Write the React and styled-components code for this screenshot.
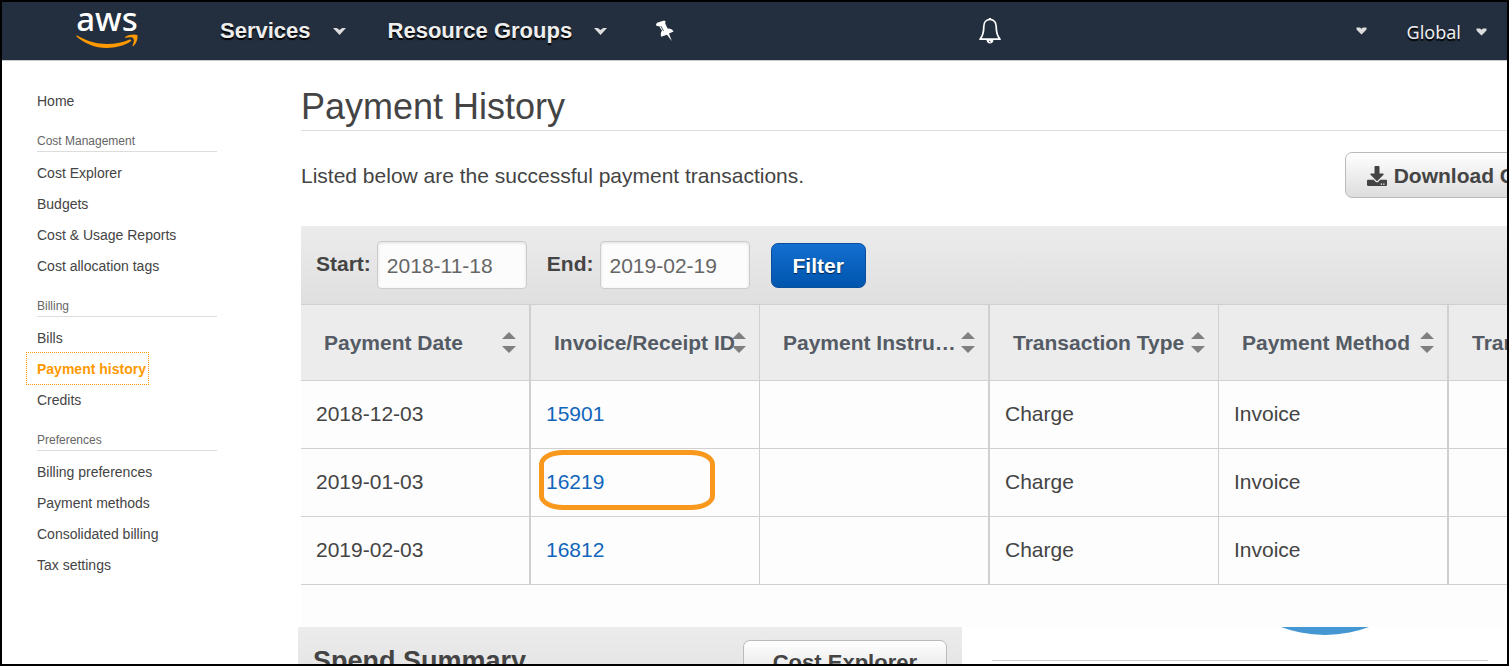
import React from "react";
import styled, { createGlobalStyle, css } from "styled-components";
import { FaDownload } from "react-icons/fa";

const GlobalStyle = createGlobalStyle`
  *, *::before, *::after { box-sizing: border-box; }
  body {
    margin: 0;
    background: #fff;
    color: #444;
    font-family: "Liberation Sans", Arial, Helvetica, sans-serif;
    font-size: 21px;
  }
  button, input { font: inherit; color: inherit; }
  a { text-decoration: none; color: inherit; }
`;

const Window = styled.div`
  height: 100vh;
  display: flex;
  flex-direction: column;
  overflow: hidden;
  border: 2px solid #000;
`;

/* ---------- top bar ---------- */

const TopBar = styled.header`
  flex: none;
  display: flex;
  align-items: center;
  height: 59px;
  padding: 0 20px 0 74px;
  background: #232f3e;
  border-bottom: 1px solid #c8cacc;
  color: #eee;
`;

const Logo = styled.a`
  display: flex;
  flex-direction: column;
  align-items: center;
  width: 62px;
  margin-right: 82px;
  padding-bottom: 8px;
  color: #fff;
  font-family: "Noto Sans", "Open Sans", sans-serif;
  font-size: 33px;
  font-weight: 500;
  line-height: 24px;
  svg { display: block; margin-top: 3px; }
`;

const NavButton = styled.button`
  display: flex;
  align-items: center;
  gap: 22px;
  margin: 0 ${(p) => p.$after || 0}px 0 0;
  padding: 0;
  border: 0;
  background: none;
  color: #eee;
  font-size: 22px;
  font-weight: bold;
  line-height: 26px;
  text-shadow: 0 2px 1px #000;
`;

const RegionButton = styled(NavButton)`
  gap: 15px;
  padding-top: 2px;
  font-family: "Noto Sans", "Open Sans", sans-serif;
  font-size: 18px;
  font-weight: normal;
`;

const IconButton = styled.button`
  display: flex;
  padding: 0;
  border: 0;
  background: none;
  color: #fff;
`;

const Tools = styled.div`
  flex: 1;
  display: flex;
  align-items: center;
  justify-content: space-between;
  margin-left: 303px;
`;

const Account = styled.div`
  display: flex;
  align-items: center;
  gap: 40px;
`;

/* ---------- side navigation ---------- */

const Body = styled.div`
  flex: 1;
  min-height: 0;
  display: flex;
  align-items: flex-start;
`;

const SideNav = styled.nav`
  flex: none;
  width: 215px;
  margin-right: 84px;
  padding: 24px 0 0 25px;
  font-size: 14px;
`;

const NavHeading = styled.h2`
  height: 36px;
  margin: 0 0 5px 10px;
  padding-top: 16px;
  border-bottom: 1px solid #ddd;
  color: #666;
  font-size: 12px;
  font-weight: normal;
  line-height: 18px;
`;

const NavLink = styled.a`
  display: block;
  width: max-content;
  padding: 2px 2px 0 10px;
  line-height: 29px;
  ${(p) =>
    p.$active &&
    css`
      color: #f90;
      font-weight: bold;
      outline: 1px dotted #f90;
    `}
`;

/* ---------- payment history ---------- */

const Main = styled.main`
  flex: 1;
  min-width: 0;
`;

const Title = styled.h1`
  height: 70px;
  margin: 0;
  padding-top: 25px;
  border-bottom: 1px solid #ddd;
  font-size: 36px;
  font-weight: normal;
  line-height: 42px;
`;

const Intro = styled.div`
  display: flex;
  align-items: center;
  justify-content: space-between;
  margin: 21px -58px 28px 0;
  p { margin: 0; padding-top: 2px; line-height: 24px; }
`;

const Button = styled.button`
  display: flex;
  align-items: center;
  gap: 7px;
  height: 46px;
  padding: 2px ${(p) => p.$pad || 21}px 0;
  border: 1px solid #bbb;
  border-radius: 7px;
  background: linear-gradient(#fff, #ddd);
  font-size: ${(p) => p.$size || 21}px;
  font-weight: bold;
  white-space: nowrap;
`;

const FilterButton = styled(Button)`
  height: 45px;
  margin-left: 21px;
  border-color: #0a4f9e;
  background: linear-gradient(#146fd0, #0055ad);
  color: #fff;
  text-shadow: 0 1px 1px #024;
`;

const FilterBar = styled.form`
  display: flex;
  align-items: center;
  height: 78px;
  padding: 0 15px;
  background: linear-gradient(#ececec, #dfdfdf);
`;

const Field = styled.label`
  display: flex;
  align-items: center;
  gap: 6px;
  & + & { margin-left: 20px; }
  span { padding-bottom: 2px; font-weight: bold; }
`;

const DateInput = styled.input`
  width: 150px;
  height: 48px;
  padding: 2px 9px 0;
  border: 1px solid #ccc;
  border-radius: 4px;
  background: #fcfcfc;
  box-shadow: inset 0 1px 3px #ddd;
  color: #666;
`;

const TableArea = styled.div`
  overflow: hidden;
  padding-bottom: 42px;
  background: #fdfdfd;
`;

const Table = styled.table`
  table-layout: fixed;
  width: 1377px;
  border-collapse: separate;
  border-spacing: 0;
  border-top: 1px solid #d0d0d0;
`;

const edge = css`
  position: relative;
  border-bottom: 1px solid #d0d0d0;
  border-right: 1px solid #d0d0d0;
  text-align: left;
  white-space: nowrap;
  &:nth-child(odd) { border-right-width: 2px; }
`;

const HeadCell = styled.th`
  ${edge}
  height: 76px;
  padding: 0 0 0 23px;
  background: #ececec;
  color: #545b64;
`;

const Cell = styled.td`
  ${edge}
  height: 68px;
  padding: 0 0 2px 15px;
  a { color: #16b; }
`;

const SortIcon = styled.svg`
  position: absolute;
  top: 27px;
  right: 13px;
`;

const Highlight = styled.span`
  position: absolute;
  top: 1px;
  left: 8px;
  width: 176px;
  height: 60px;
  border: 5px solid #f8981d;
  border-radius: 24px / 14px;
  pointer-events: none;
`;

/* ---------- spend summary ---------- */

const Bottom = styled.section`
  display: flex;
  align-items: flex-start;
  margin-left: -3px;
  background: #fff;
`;

const SummaryHead = styled.div`
  flex: none;
  display: flex;
  align-items: flex-start;
  justify-content: space-between;
  width: 664px;
  height: 78px;
  padding: 13px 15px;
  background: linear-gradient(#ececec, #dfdfdf);
  h2 {
    margin: 0;
    padding-top: 5px;
    font-size: 27px;
    line-height: 32px;
  }
`;

const SummaryButton = styled(Button)`
  padding-top: 0;
`;

const ChartPanel = styled.div`
  flex: 1;
  display: flex;
  flex-direction: column;
  align-items: center;
  margin: 0 19px 0 30px;
  padding-left: 169px;
  svg { display: block; }
`;

const Rule = styled.hr`
  align-self: stretch;
  margin: 25px 0 0 -169px;
  border: 0;
  border-top: 1px solid #ccc;
`;

function Caret() {
  return (
    <svg width="13" height="8" viewBox="0 0 13 8" aria-hidden="true">
      <path d="M0 1H3.800L6.500 3L9.200 1H13L6.500 8Z" fill="#ddd" />
    </svg>
  );
}

function SmallCaret() {
  return (
    <svg width="11" height="8" viewBox="0 0 11 8" aria-hidden="true">
      <path d="M.5 .5H4L5.500 1.800L7 .5H10.500V2.500L5.500 7.500L.5 2.500Z" fill="#ddd" />
    </svg>
  );
}

function Smile() {
  return (
    <svg width="62" height="14" viewBox="0 0 62 14" fill="#f90" aria-hidden="true">
      <path d="M.2 2.300C0 1.500 .8 1.300 1.500 1.800C12 7.800 21 10 31 10C40 10 47 8.300 53.500 5.500C55 5 56 6.300 54.800 7.300C48 12 39 14 31 14C19 14 8 9.500 .2 2.300Z" />
      <path d="M57.200 4.200C56 2.800 52 3.500 49.500 3.800C48.800 3.900 48.700 3.300 49.300 2.800C53 .3 59 0 61.200 1C62.300 2.500 61 9 57.500 12C56.900 12.500 56.300 12.200 56.600 11.600C57.400 9.500 58.600 5.800 57.200 4.200Z" />
    </svg>
  );
}

function Pin() {
  return (
    <svg width="20" height="22" viewBox="0 0 20 22" aria-hidden="true">
      <path
        d="M1 4.500L2 2.700L9.200 .5L10.600 1.500L10.200 3.600L12.600 8.600C15.200 8.400 17.600 9.400 18.600 11.500L14 13.600L16.800 21L12 14.700L6.200 16.800C5.400 14.500 5.800 12.500 7 10.800L4.300 6.200L1.600 6Z"
        fill="#fff"
      />
      <path d="M5.800 6L8.600 11" stroke="#232f3e" strokeWidth=".8" />
    </svg>
  );
}

function Bell() {
  return (
    <svg width="24" height="28" viewBox="0 0 24 28" fill="none" aria-hidden="true">
      <path
        d="M12 2.500C8 2.500 5.800 5.500 5.800 9.500C5.800 15 4.800 19 2 22.200H22C19.200 19 18.200 15 18.200 9.500C18.200 5.500 16 2.500 12 2.500Z"
        stroke="#fff"
        strokeWidth="1.700"
        strokeLinejoin="round"
      />
      <path d="M10.800 1H13.200V3H10.800Z" fill="#fff" />
      <path d="M8.500 22.500H15.500C15.500 25 14 26.500 12 26.500S8.500 25 8.500 22.500Z" fill="#fff" />
      <path d="M11 24L12.500 25" stroke="#232f3e" />
    </svg>
  );
}

function Sort() {
  return (
    <SortIcon width="14" height="21" viewBox="0 0 14 21" fill="#808080" aria-hidden="true">
      <path d="M0 7L7 0L14 7ZM0 14H14L7 21Z" />
    </SortIcon>
  );
}

const navGroups = [
  ["Cost Management", ["Cost Explorer", "Budgets", "Cost & Usage Reports", "Cost allocation tags"]],
  ["Billing", ["Bills", "Payment history", "Credits"]],
  ["Preferences", ["Billing preferences", "Payment methods", "Consolidated billing", "Tax settings"]],
];

const columns = [
  "Payment Date",
  "Invoice/Receipt ID",
  "Payment Instru…",
  "Transaction Type",
  "Payment Method",
  "Transaction",
];

const payments = [
  { date: "2018-12-03", id: "15901" },
  { date: "2019-01-03", id: "16219", marked: true },
  { date: "2019-02-03", id: "16812" },
];

export default function App() {
  return (
    <>
      <GlobalStyle />
      <Window>
        <TopBar>
          <Logo href="#">
            aws
            <Smile />
          </Logo>
          <NavButton $after={42}>
            Services <Caret />
          </NavButton>
          <NavButton $after={48}>
            Resource Groups <Caret />
          </NavButton>
          <IconButton aria-label="Pin">
            <Pin />
          </IconButton>
          <Tools>
            <IconButton aria-label="Notifications">
              <Bell />
            </IconButton>
            <Account>
              <NavButton aria-label="Account">
                <SmallCaret />
              </NavButton>
              <RegionButton>
                Global <SmallCaret />
              </RegionButton>
            </Account>
          </Tools>
        </TopBar>

        <Body>
          <SideNav>
            <NavLink href="#">Home</NavLink>
            {navGroups.map(([heading, links]) => (
              <React.Fragment key={heading}>
                <NavHeading>{heading}</NavHeading>
                {links.map((text) => (
                  <NavLink key={text} href="#" $active={text === "Payment history"}>
                    {text}
                  </NavLink>
                ))}
              </React.Fragment>
            ))}
          </SideNav>

          <Main>
            <Title>Payment History</Title>
            <Intro>
              <p>Listed below are the successful payment transactions.</p>
              <Button>
                <FaDownload size={20} /> Download CSV
              </Button>
            </Intro>

            <FilterBar onSubmit={(e) => e.preventDefault()}>
              <Field>
                <span>Start:</span>
                <DateInput type="text" defaultValue="2018-11-18" />
              </Field>
              <Field>
                <span>End:</span>
                <DateInput type="text" defaultValue="2019-02-19" />
              </Field>
              <FilterButton>Filter</FilterButton>
            </FilterBar>

            <TableArea>
              <Table>
                <colgroup>
                  {columns.map((name, i) => (
                    <col key={name} width={i % 2 ? 229 : 230} />
                  ))}
                </colgroup>
                <thead>
                  <tr>
                    {columns.map((name) => (
                      <HeadCell key={name} scope="col">
                        {name}
                        <Sort />
                      </HeadCell>
                    ))}
                  </tr>
                </thead>
                <tbody>
                  {payments.map((p) => (
                    <tr key={p.id}>
                      <Cell>{p.date}</Cell>
                      <Cell>
                        <a href="#">{p.id}</a>
                        {p.marked && <Highlight />}
                      </Cell>
                      <Cell />
                      <Cell>Charge</Cell>
                      <Cell>Invoice</Cell>
                      <Cell />
                    </tr>
                  ))}
                </tbody>
              </Table>
            </TableArea>

            <Bottom>
              <SummaryHead>
                <h2>Spend Summary</h2>
                <SummaryButton $size={22} $pad={29}>Cost Explorer</SummaryButton>
              </SummaryHead>
              <ChartPanel>
                <svg width="90" height="8" viewBox="0 0 90 8" aria-hidden="true">
                  <circle cx="45" cy="-117" r="125" fill="#4497d3" />
                </svg>
                <Rule />
              </ChartPanel>
            </Bottom>
          </Main>
        </Body>
      </Window>
    </>
  );
}
